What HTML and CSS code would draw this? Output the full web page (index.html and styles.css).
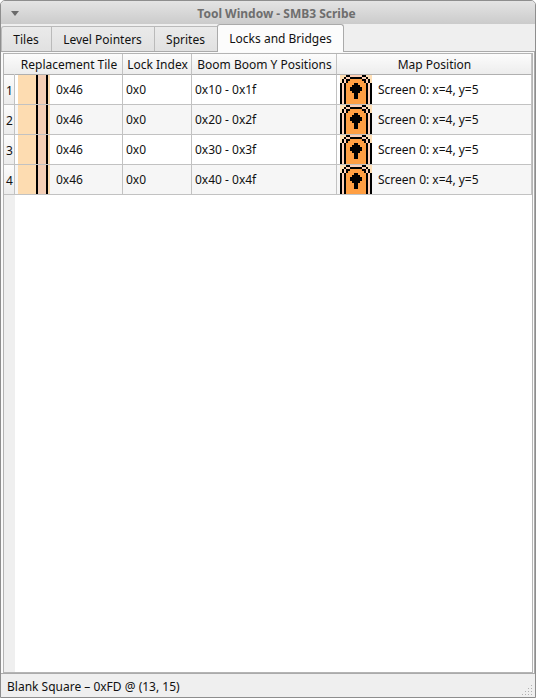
FILE: index.html
```html
<!DOCTYPE html>
<html lang="en">
<head>
<meta charset="utf-8">
<title>Tool Window - SMB3 Scribe</title>
<link rel="stylesheet" href="styles.css">
</head>
<body>
<svg width="0" height="0" class="defs" aria-hidden="true">
  <symbol id="door" viewBox="0 0 32 29">
    <g shape-rendering="crispEdges">
      <path fill="#ffdfb5" d="M0 0h32v29H0z"/>
      <path fill="#000" d="M6 0h20v2h2v2h2v4h2v21H0V8h2V4h2V2h2z"/>
      <path fill="#ffcfb4" d="M10 0h12v2h4v2h2v4h2v21H2V8h2V4h2V2h4z"/>
      <path fill="#000" d="M10 2h12v2h4v4h2v21H4V8h2V4h4z"/>
      <path fill="#ff9f43" d="M10 4h12v2h2v2h2v21H6V8h2V6h2z"/>
      <path fill="#000" d="M14 8h4v2h2v2h2v4h-2v2h-2v6h-4v-6h-2v-2h-2v-4h2v-2h2z"/>
    </g>
  </symbol>
</svg>
<div class="window">
  <header class="titlebar"><svg class="arrow" width="8" height="5" viewBox="0 0 8 5"><path d="M0 0h8L4 5z"/></svg><span class="caption">Tool Window - SMB3 Scribe</span></header>
  <nav class="tabs"><span class="tab t1">Tiles</span><span class="tab t2">Level Pointers</span><span class="tab t3">Sprites</span><span class="tab active">Locks and Bridges</span></nav>
  <main class="pane">
    <div class="table">
      <div class="row head"><span></span><span>Replacement Tile</span><span>Lock Index</span><span>Boom Boom Y Positions</span><span>Map Position</span></div>
      <div class="row"><span class="num">1</span><span><i class="tile"></i>0x46</span><span>0x0</span><span>0x10 - 0x1f</span><span><svg class="door"><use href="#door"/></svg>Screen 0: x=4, y=5</span></div>
      <div class="row alt"><span class="num">2</span><span><i class="tile"></i>0x46</span><span>0x0</span><span>0x20 - 0x2f</span><span><svg class="door"><use href="#door"/></svg>Screen 0: x=4, y=5</span></div>
      <div class="row"><span class="num">3</span><span><i class="tile"></i>0x46</span><span>0x0</span><span>0x30 - 0x3f</span><span><svg class="door"><use href="#door"/></svg>Screen 0: x=4, y=5</span></div>
      <div class="row alt"><span class="num">4</span><span><i class="tile"></i>0x46</span><span>0x0</span><span>0x40 - 0x4f</span><span><svg class="door"><use href="#door"/></svg>Screen 0: x=4, y=5</span></div>
      <div class="gutter"></div>
    </div>
  </main>
  <footer class="status"><span>Blank Square – 0xFD @ (13, 15)</span><svg class="grip" width="11" height="11" viewBox="0 0 11 11" shape-rendering="crispEdges"><path d="M9 0h1v1H9zM6 3h1v1H6zM9 3h1v1H9zM3 6h1v1H3zM6 6h1v1H6zM9 6h1v1H9zM0 9h1v1H0zM3 9h1v1H3zM6 9h1v1H6zM9 9h1v1H9z"/></svg></footer>
</div>
</body>
</html>
```
FILE: styles.css
```css
* { box-sizing: border-box; }
body {
  margin: 0;
  background: #fff;
  font: 12px/17px "Noto Sans", sans-serif;
  color: #111;
}
.defs { display: block; }
.window {
  height: 698px;
  display: flex;
  flex-direction: column;
  border: 1px solid #8e8e8e;
  border-radius: 5px 5px 0 0;
  background: #efefef;
  overflow: hidden;
}
.titlebar {
  height: 23px;
  display: flex;
  align-items: center;
  padding-left: 10px;
  background: linear-gradient(#e4e4e4, #cbcbcb);
  color: #6e6e6e;
  font-weight: bold;
}
.arrow { fill: #6b6b6b; margin-top: 2px; }
.caption { flex: 1; text-align: center; padding: 2px 1px 0 0; }
.tabs {
  height: 27px;
  display: flex;
  align-items: flex-end;
}
.tab {
  height: 25px;
  padding: 4px 1px 0 0;
  text-align: center;
  border: 1px solid #bababa;
  border-left-width: 0;
  border-bottom: 0;
  background: linear-gradient(#eaeaea, #e1e1e1);
}
.t1 { width: 51px; border-left-width: 1px; border-top-left-radius: 3px; }
.t2 { width: 103px; }
.t3 { width: 62px; border-right-width: 0; }
.active {
  width: 127px;
  height: 28px;
  margin-bottom: -1px;
  padding: 5px 0 0;
  border-left-width: 1px;
  border-color: #aaa;
  border-radius: 3px 3px 0 0;
  background: #fcfcfc;
  z-index: 1;
}
.pane {
  height: 623px;
  padding: 1px 1px 0 2px;
  border-top: 1px solid #aaa;
  border-right: 1px solid #aaa;
  border-bottom: 1px solid #aaa;
  background: #fafafa;
}
.table {
  height: 620px;
  display: flex;
  flex-direction: column;
  border: 1px solid #b4b4b4;
  background: #fff;
}
.row {
  height: 30px;
  flex: none;
  display: grid;
  grid-template-columns: 11px 108px 69px 145px 1fr;
}
.row > span {
  display: flex;
  align-items: center;
  padding-left: 3px;
  border-right: 1px solid #c2c2c2;
  border-bottom: 1px solid #c2c2c2;
  white-space: nowrap;
}
.alt { background: #f6f6f6; }
.row.head { height: 21px; background: linear-gradient(#fcfcfc, #ececec); }
.head > span { justify-content: center; padding: 0 0 0 1px; border-bottom-color: #b0b0b0; }
.head > span:first-child { border-right-color: transparent; }
.row > .num {
  justify-content: center;
  padding: 2px 0 0 1px;
  background: linear-gradient(#fcfcfc, #ececec);
}
.tile {
  width: 32px;
  height: 29px;
  margin-right: 6px;
  background: linear-gradient(90deg, #fddcb1 18px, #000 18px 20px, #f3ceb6 20px 28px, #000 28px 30px, #fddcb1 30px);
}
.door { width: 32px; height: 29px; margin-right: 6px; }
.gutter { width: 11px; flex: 1; background: #efefef; }
.status {
  flex: 1;
  display: flex;
  align-items: center;
  justify-content: space-between;
  padding: 2px 2px 0 6px;
}
.grip { align-self: flex-end; margin-bottom: 1px; fill: #b0b0b0; }
```
